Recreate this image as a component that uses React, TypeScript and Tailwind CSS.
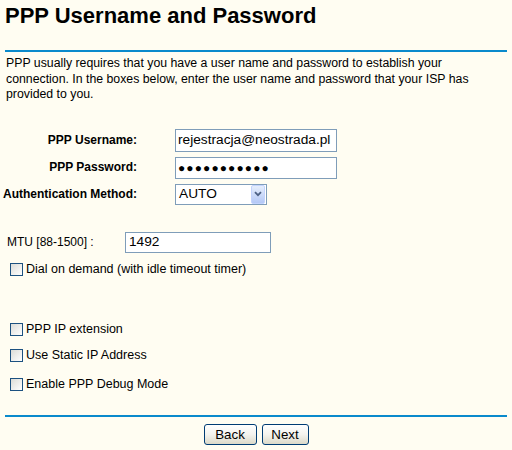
import React from "react";

const font = { fontFamily: '"Liberation Sans", Arial, sans-serif' };

function Checkbox({ label }: { label: string }) {
  return (
    <div className="flex items-center h-[15px] pl-[5px]">
      <div className="w-[13px] h-[13px] border border-[#1c5180] bg-gradient-to-br from-[#dcdcd7] to-[#ffffff] shrink-0" />
      <span className="ml-[3px] text-[12.5px] leading-[15px] text-[#000]">{label}</span>
    </div>
  );
}

function Btn({ label, w }: { label: string; w: string }) {
  return (
    <div
      className={`${w} h-[21px] border border-[#003c74] rounded-[3px] bg-gradient-to-b from-[#ffffff] via-[#f4f3ee] to-[#dcd9c9] flex items-center justify-center text-[13.33px] leading-[15px] text-black`}
    >
      {label}
    </div>
  );
}

export default function App() {
  return (
    <div className="w-[512px] h-[450px] bg-[#fffdf2] overflow-hidden" style={font}>
      <div className="px-[5px]">
        <h1 className="pt-[3px] text-[22px] leading-[26px] font-bold text-black">
          PPP Username and Password
        </h1>
        <div className="mt-[21px] h-[2px] bg-[#0a8acc]" />
        <p className="mt-[4px] pl-[1px] w-[492px] text-[12.3px] leading-[15.5px] text-black">
          PPP usually requires that you have a user name and password to establish your
          connection. In the boxes below, enter the user name and password that your ISP has
          provided to you.
        </p>

        <div className="mt-[26px] grid grid-cols-[132px_1fr] gap-x-[38px]">
          <div className="h-[23px] flex items-center justify-end text-[12px] leading-[15px] font-bold">
            PPP Username:
          </div>
          <div className="h-[23px] w-[162px] border border-[#7f9db9] bg-white flex items-center pl-[2px] overflow-hidden text-[13.7px] whitespace-nowrap">
            rejestracja@neostrada.pl
          </div>

          <div className="mt-[5px] h-[22px] flex items-center justify-end text-[12px] leading-[15px] font-bold">
            PPP Password:
          </div>
          <div className="mt-[5px] h-[22px] w-[162px] border border-[#7f9db9] bg-white flex items-center pl-[2px] text-[12px] tracking-[1.1px] whitespace-nowrap">
            ●●●●●●●●●●●
          </div>

          <div className="mt-[5px] h-[21px] flex items-center justify-end text-[12px] leading-[15px] font-bold whitespace-nowrap">
            Authentication Method:
          </div>
          <div className="mt-[5px] h-[21px] w-[92px] border border-[#7f9db9] bg-white flex items-center">
            <span className="flex-1 pl-[3px] text-[13.7px]">AUTO</span>
            <div className="w-[14px] h-[19px] mr-[1px] rounded-[2px] bg-gradient-to-b from-[#e6eefc] to-[#b4c8f6] border border-[#c3d3fd] flex items-center justify-center">
              <svg width="8" height="6" viewBox="0 0 8 6">
                <path d="M1 1.2 L4 4.2 L7 1.2" stroke="#4d6185" strokeWidth="1.8" fill="none" />
              </svg>
            </div>
          </div>
        </div>

        <div className="mt-[27px] flex items-center">
          <div className="w-[120px] pl-[2px] text-[12px] leading-[15px]">MTU [88-1500] :</div>
          <div className="h-[21px] w-[146px] border border-[#7f9db9] bg-white flex items-center pl-[3px] text-[13.7px]">
            1492
          </div>
        </div>

        <div className="mt-[9px]">
          <Checkbox label="Dial on demand (with idle timeout timer)" />
        </div>
        <div className="mt-[45px]">
          <Checkbox label="PPP IP extension" />
        </div>
        <div className="mt-[11px]">
          <Checkbox label="Use Static IP Address" />
        </div>
        <div className="mt-[14px]">
          <Checkbox label="Enable PPP Debug Mode" />
        </div>

        <div className="mt-[23px] h-[2px] bg-[#0a8acc]" />
        <div className="mt-[7px] flex justify-center gap-[5px]">
          <Btn label="Back" w="w-[53px]" />
          <Btn label="Next" w="w-[47px]" />
        </div>
      </div>
    </div>
  );
}
